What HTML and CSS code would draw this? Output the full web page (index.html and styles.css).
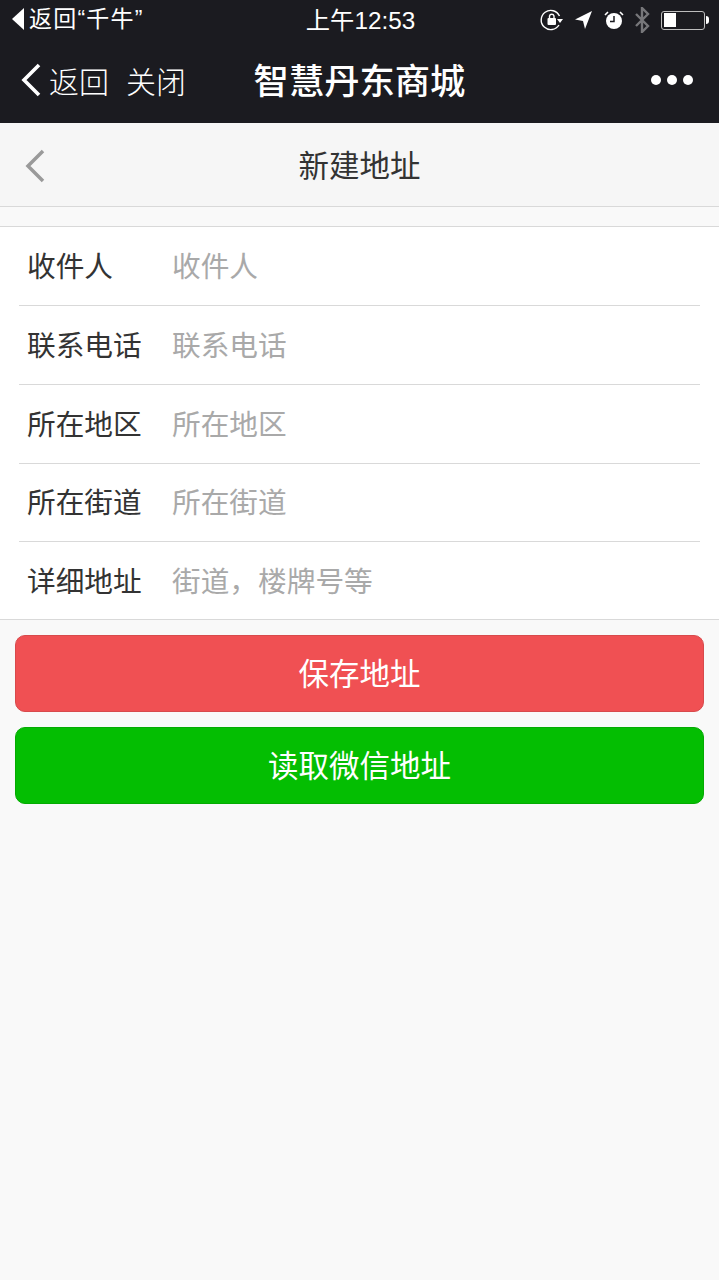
FILE: index.html
```html
<!DOCTYPE html>
<html lang="zh">
<head>
<meta charset="utf-8">
<title>新建地址</title>
<link rel="stylesheet" href="styles.css">
</head>
<body>
<header class="wechat">
  <div class="status">
    <div class="status-left">
      <svg class="back-tri" viewBox="0 0 12 22" width="12" height="22"><path d="M12 0V22L0 11Z" fill="#fff"/></svg>
      <span>返回“千牛”</span>
    </div>
    <div class="status-time">上午12:53</div>
    <div class="status-right">
      <svg class="ic-rot" viewBox="0 0 24 24" width="24" height="24"><path d="M19.5 8A9.6 9.6 0 1 0 19 17" fill="none" stroke="#fff" stroke-width="1.4"/><path d="M17 11h6l-3 4z" fill="#fff"/><rect x="7.5" y="10" width="8.500" height="7" rx="1" fill="#fff"/><path d="M9.500 10V8a2.300 2.300 0 0 1 4.500 0v2" fill="none" stroke="#fff" stroke-width="1.400"/></svg>
      <svg class="ic-loc" viewBox="0 0 18 20" width="18" height="20"><path d="M17 1L0 9.500l8 1.500 2 8z" fill="#fff"/></svg>
      <svg class="ic-alarm" viewBox="0 0 20 20" width="20" height="20"><circle cx="10" cy="11" r="8" fill="#fff"/><path d="M10 6v5.500H6" fill="none" stroke="#1b1b20" stroke-width="1.500"/><path d="M1 5l3-3M19 5l-3-3" stroke="#fff" stroke-width="1.600"/></svg>
      <svg class="ic-bt" viewBox="0 0 16 26" width="16" height="26"><path d="M2 7l12 12-6 6V1l6 6L2 19" fill="none" stroke="#77777a" stroke-width="2.400"/></svg>
      <div class="battery"><div class="battery-fill"></div></div>
      <div class="battery-tip"></div>
    </div>
  </div>
  <div class="wx-nav">
    <div class="wx-left">
      <svg class="wx-chev" viewBox="0 0 22 34" width="22" height="34"><path d="M19 2L4 17l15 15" fill="none" stroke="#fff" stroke-width="3.600"/></svg>
      <span class="wx-back">返回</span>
      <span class="wx-close">关闭</span>
    </div>
    <div class="wx-title">智慧丹东商城</div>
    <div class="wx-more"><i></i><i></i><i></i></div>
  </div>
</header>
<nav class="page-nav">
  <svg class="page-chev" viewBox="0 0 22 34" width="22" height="34"><path d="M19 2L4 17l15 15" fill="none" stroke="#9a9a9a" stroke-width="3.500"/></svg>
  <h1 class="page-title">新建地址</h1>
</nav>
<form class="form">
  <div class="row"><span class="label">收件人</span><span class="ph">收件人</span></div>
  <div class="row"><span class="label">联系电话</span><span class="ph">联系电话</span></div>
  <div class="row"><span class="label">所在地区</span><span class="ph">所在地区</span></div>
  <div class="row"><span class="label">所在街道</span><span class="ph">所在街道</span></div>
  <div class="row"><span class="label">详细地址</span><span class="ph">街道，楼牌号等</span></div>
</form>
<div class="actions">
  <button type="button" class="btn btn-red">保存地址</button>
  <button type="button" class="btn btn-green">读取微信地址</button>
</div>
</body>
</html>
```
FILE: styles.css
```css
* { box-sizing: border-box; }
html, body { margin: 0; padding: 0; }
body {
  width: 719px;
  height: 1280px;
  overflow: hidden;
  background: #f9f9f9;
  font-family: "Noto Sans CJK SC", "Liberation Sans", sans-serif;
}
.wechat { height: 123px; background: #1b1b20; color: #fff; }
.status {
  height: 40px;
  display: grid;
  grid-template-columns: 1fr auto 1fr;
  align-items: center;
}
.status-left {
  display: flex;
  align-items: center;
  padding-left: 12px;
  gap: 5px;
  font-family: "Liberation Sans", "Noto Sans CJK SC", sans-serif;
  font-size: 23px;
  letter-spacing: 1.200px;
  line-height: 36px;
  padding-bottom: 2px;
}
.status-time {
  font-family: "Liberation Sans", "Noto Sans CJK SC", sans-serif;
  font-size: 24.300px;
  line-height: 38px;
  margin: 1px 0 0 2px;
}
.status-right { display: flex; align-items: center; justify-content: flex-end; padding-right: 10px; }
.ic-rot { margin-right: 11px; }
.ic-loc { margin-right: 11px; }
.ic-alarm { margin-right: 10px; }
.ic-bt { margin-right: 11px; }
.battery {
  width: 44px;
  height: 19px;
  border: 1.500px solid #bdbdbd;
  border-radius: 3px;
  padding: 1.500px;
}
.battery-fill { width: 12px; height: 100%; background: #fff; }
.battery-tip { width: 3px; height: 8px; background: #fff; border-radius: 0 3px 3px 0; margin-left: 1px; }
.wx-nav {
  height: 83px;
  padding: 0 26px 4px 20px;
  display: grid;
  grid-template-columns: 1fr auto 1fr;
  align-items: center;
}
.wx-left { display: flex; align-items: center; font-size: 30px; font-weight: 300; color: #fff; }
.wx-chev { margin-right: 7px; }
.wx-back { margin-right: 17px; }
.wx-title { font-size: 35.300px; font-weight: 500; margin-left: 6px; margin-top: -2px; }
.wx-more { display: flex; justify-content: flex-end; gap: 6px; }
.wx-more i { width: 10px; height: 10px; border-radius: 50%; background: #fff; }
.page-nav {
  height: 84px;
  background: #f6f6f6;
  border-bottom: 1px solid #d9d9d9;
  display: flex;
  align-items: center;
  justify-content: center;
  position: relative;
}
.page-chev { position: absolute; left: 24px; top: 26px; }
.page-title { margin: 0 0 2px; font-size: 30.500px; font-weight: 400; color: #333; }
.form {
  margin-top: 19px;
  background: #fff;
  border-top: 1px solid #d9d9d9;
  border-bottom: 1px solid #d9d9d9;
  padding: 0 19px;
}
.row {
  height: 79px;
  display: flex;
  align-items: center;
  padding-left: 8px;
  padding-bottom: 4px;
  border-bottom: 1px solid #d9d9d9;
  font-size: 28.700px;
}
.row:nth-child(4) { height: 78px; }
.row:last-child { border-bottom: 0; height: 77px; padding-bottom: 2px; }
.label { width: 145px; color: #333; }
.ph { color: #a9a9a9; }
.actions { padding: 15px 15px 0; display: flex; flex-direction: column; gap: 15px; }
.btn {
  height: 77px;
  border-radius: 10px;
  font-family: inherit;
  font-size: 30.500px;
  color: #fff;
  padding: 0 0 4px;
}
.btn-red { background: #f05053; border: 1px solid #d84a4c; }
.btn-green { background: #04be02; border: 1px solid #04ab02; }
```
